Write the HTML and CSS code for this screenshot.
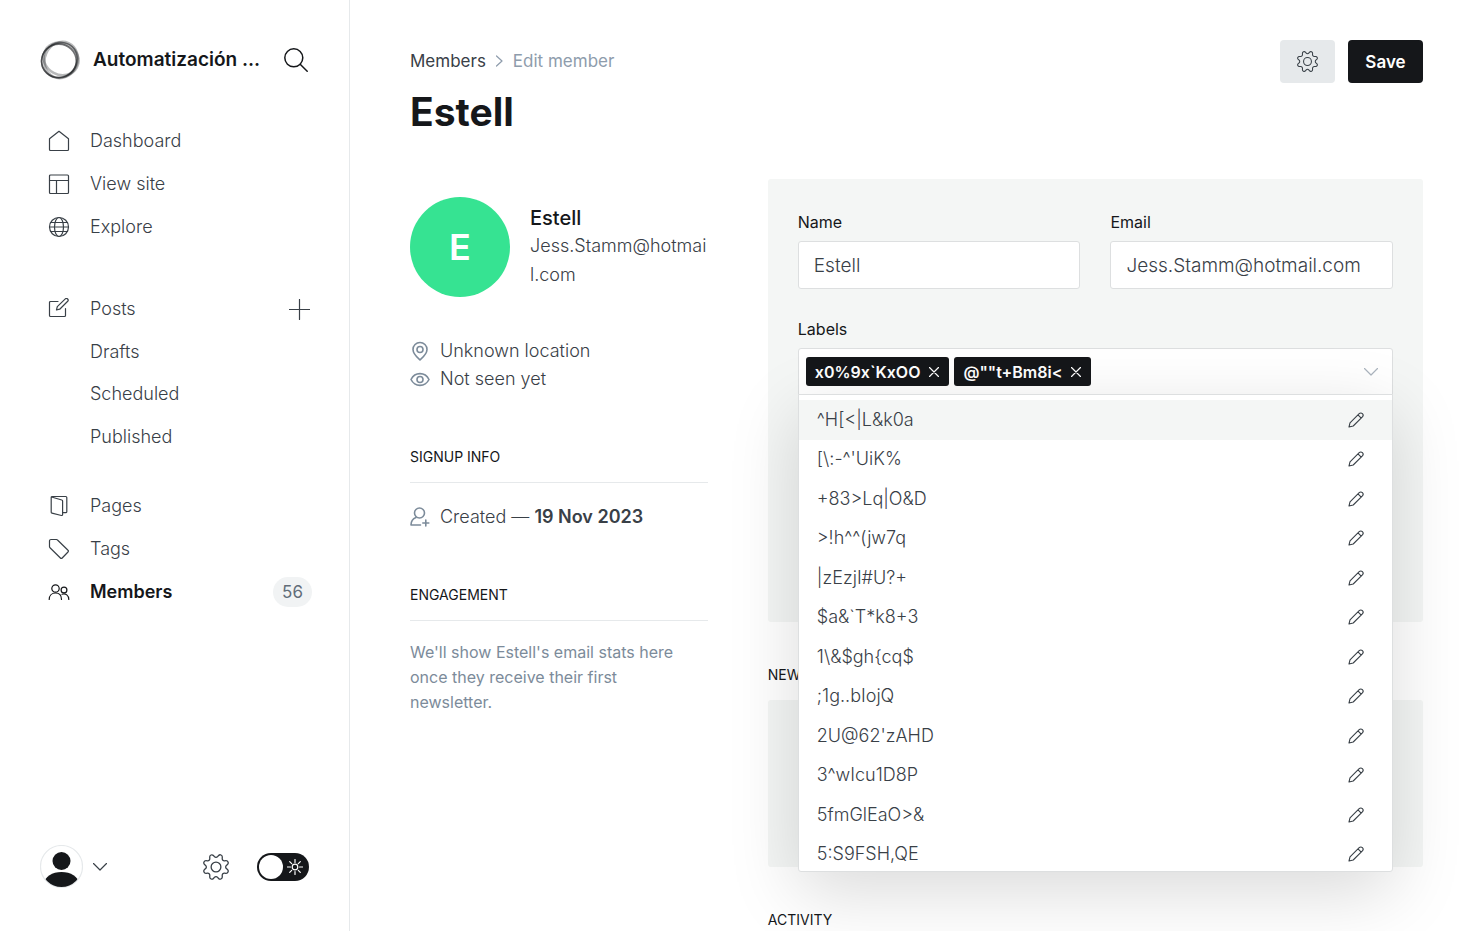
FILE: index.html
```
<!DOCTYPE html>
<html lang="en">
<head>
<meta charset="utf-8">
<title>Edit member</title>
<link rel="stylesheet" href="styles.css">
</head>
<body>
<svg class="sprite" aria-hidden="true">
  <symbol id="gear" viewBox="0 0 24 24"><path d="M10.546 2.438a1.957 1.957 0 002.908 0L14.4 1.4a1.959 1.959 0 013.41 1.413l-.071 1.4A1.958 1.958 0 0019.79 6.27l1.4-.071a1.959 1.959 0 011.413 3.41l-1.042.94a1.96 1.96 0 000 2.909l1.042.94a1.959 1.959 0 01-1.413 3.41l-1.4-.071a1.958 1.958 0 00-2.056 2.056l.071 1.4A1.959 1.959 0 0114.4 22.6l-.941-1.041a1.959 1.959 0 00-2.908 0L9.606 22.6A1.959 1.959 0 016.2 21.192l.072-1.4a1.958 1.958 0 00-2.056-2.056l-1.4.071A1.958 1.958 0 011.4 14.4l1.041-.94a1.96 1.96 0 000-2.909L1.4 9.606A1.958 1.958 0 012.809 6.2l1.4.071a1.958 1.958 0 002.058-2.06L6.2 2.81A1.959 1.959 0 019.606 1.4z"/><circle cx="12" cy="12" r="4.5"/></symbol>
  <symbol id="pencil" viewBox="0 0 16 16"><path d="M1 15l1-4.200L11.200 1.600a2 2 0 0 1 3.200 3.200L5.200 14zM10 2.900l3.200 3.200"/></symbol>
  <symbol id="chevron" viewBox="0 0 14 8"><path d="M.5.5L7 7 13.500.5"/></symbol>
  <symbol id="cross" viewBox="0 0 10 10"><path d="M.5.5l9 9M9.500.5l-9 9"/></symbol>
</svg>
<div class="app">
  <aside class="sidebar">
    <header class="brand">
      <svg class="logo" viewBox="0 0 38 38" aria-hidden="true"><g fill="none" stroke="#15171a"><ellipse cx="18" cy="20" rx="16.500" ry="16" stroke-width="1.600" stroke-opacity=".6"/><ellipse cx="20" cy="18" rx="17" ry="15" transform="rotate(28 20 18)" stroke-width="2.500" stroke-opacity=".3"/><ellipse cx="20" cy="19" rx="15.500" ry="17.500" transform="rotate(24 20 19)" stroke-width="2.500" stroke-opacity=".3"/><ellipse cx="18.500" cy="19" rx="17.500" ry="16" transform="rotate(-35 18.500 19)" stroke-width="1.500" stroke-opacity=".4"/></g></svg>
      <span class="site-name">Automatización ...</span>
      <button class="plain search" aria-label="Search"><svg width="24" height="24" viewBox="0 0 24 24"><circle cx="9.800" cy="9.800" r="9"/><path d="M16.200 16.200l7 7"/></svg></button>
    </header>
    <nav class="nav">
      <ul>
        <li><a href="#"><svg width="22" height="22" viewBox="0 0 22 22"><path d="M1.500 8.700L11 1.300l9.500 7.400V19.500a1 1 0 0 1-1 1h-17a1 1 0 0 1-1-1z"/></svg>Dashboard</a></li>
        <li><a href="#"><svg width="22" height="22" viewBox="0 0 22 22"><rect x="1.500" y="2" width="19" height="18.500" rx="1"/><path d="M1.500 7.500h19M8.500 7.500v13"/></svg>View site</a></li>
        <li><a href="#"><svg width="22" height="22" viewBox="0 0 22 22"><circle cx="11" cy="11" r="9.500"/><ellipse cx="11" cy="11" rx="4.500" ry="9.500"/><path d="M2.500 6.500h17M1.500 11h19M2.500 15.500h17"/></svg>Explore</a></li>
      </ul>
      <ul class="posts">
        <li><a href="#"><svg width="22" height="22" viewBox="0 0 22 22"><path d="M10 3.500H2.500a1 1 0 0 0-1 1V17.500a1 1 0 0 0 1 1h14a1 1 0 0 0 1-1V10.500"/><path d="M8.500 12l.8-3.400 8-7.700a1.700 1.700 0 0 1 2.400 2.400l-8 7.900z"/></svg>Posts</a><button class="plain" aria-label="New post"><svg width="21" height="21" viewBox="0 0 21 21"><path d="M10.500.5v20M.5 10.500h20"/></svg></button></li>
        <li><a class="sub" href="#">Drafts</a></li>
        <li><a class="sub" href="#">Scheduled</a></li>
        <li><a class="sub" href="#">Published</a></li>
      </ul>
      <ul>
        <li><a href="#"><svg width="22" height="22" viewBox="0 0 22 22"><path d="M3.500 2l10.300 3a1 1 0 0 1 .8 1V19.500a1 1 0 0 1-1.200 1L4 18.200a1 1 0 0 1-.8-1V2.500a1 1 0 0 1 1-1H17.800a1 1 0 0 1 1 1V16.700a1 1 0 0 1-1 1h-3"/></svg>Pages</a></li>
        <li><a href="#"><svg width="22" height="22" viewBox="0 0 22 22"><path d="M1.500 3a1.500 1.500 0 0 1 1.500-1.500h5.500a1.500 1.500 0 0 1 1 .5L20 12.200a1.200 1.200 0 0 1 0 1.800l-5.800 6a1.200 1.200 0 0 1-1.800 0L2 9.800a1.500 1.500 0 0 1-.5-1z"/></svg>Tags</a></li>
        <li><a class="current" href="#"><svg width="22" height="22" viewBox="0 0 22 22"><circle cx="7.500" cy="7.500" r="3.700"/><circle cx="16" cy="9" r="2.900"/><path d="M1.200 18.500c0-3.800 2.500-6.500 6.300-6.500s6 2.700 6 6.500M14 13.200c3.800-1.200 6.800 1.200 6.800 5.300"/></svg>Members</a><span class="count">56</span></li>
      </ul>
    </nav>
    <footer class="account">
      <button class="plain user" aria-label="Account"><svg width="43" height="43" viewBox="0 0 43 43"><defs><clipPath id="disc"><circle cx="21.500" cy="21.500" r="20.500"/></clipPath></defs><circle cx="21.500" cy="21.500" r="21" fill="#fff" stroke="#e6e9eb"/><g clip-path="url(#disc)" fill="#15171a" stroke="none"><circle cx="21.500" cy="16" r="9"/><ellipse cx="21.500" cy="38" rx="17" ry="11"/></g></svg><svg width="14" height="8"><use href="#chevron"/></svg></button>
      <button class="plain settings" aria-label="Settings"><svg width="26" height="26"><use href="#gear"/></svg></button>
      <label class="toggle"><input type="checkbox" aria-label="Dark mode"><svg width="16" height="16" viewBox="0 0 16 16"><circle cx="8" cy="8" r="2.800"/><path d="M8 .5v3M8 12.500v3M.5 8h3M12.500 8h3M2.700 2.700l2 2M11.300 11.300l2 2M2.700 13.300l2-2M11.300 4.700l2-2"/></svg></label>
    </footer>
  </aside>

  <main class="main">
    <header class="topbar">
      <div>
        <nav class="crumbs" aria-label="Breadcrumb"><a href="#">Members</a><svg width="7" height="12" viewBox="0 0 7 12"><path d="M.5 1l5.500 5-5.500 5"/></svg><span>Edit member</span></nav>
        <h1>Estell</h1>
      </div>
      <div class="actions">
        <button class="btn btn-gray" aria-label="Member actions"><svg width="21" height="21"><use href="#gear"/></svg></button>
        <button class="btn btn-black">Save</button>
      </div>
    </header>
    <div class="columns">
      <section class="profile">
        <div class="identity">
          <div class="avatar">E</div>
          <div class="who"><h2>Estell</h2><p>Jess.Stamm@hotmail.com</p></div>
        </div>
        <ul class="facts">
          <li><svg width="20" height="20" viewBox="0 0 20 20"><path d="M10 19c-2-1.800-7-6-7-10.500a7 7 0 0 1 14 0C17 13 12 17.200 10 19z"/><circle cx="10" cy="8.500" r="3"/></svg>Unknown location</li>
          <li><svg width="20" height="20" viewBox="0 0 20 20"><path d="M1 10.500C5 2.700 15 2.700 19 10.500 15 18.300 5 18.300 1 10.500z"/><circle cx="10" cy="10.500" r="3"/></svg>Not seen yet</li>
        </ul>
        <h3>Signup info</h3>
        <p class="created"><svg width="20" height="20" viewBox="0 0 20 20"><circle cx="9.500" cy="6" r="5"/><path d="M6 10.500c-3 1.200-5 3.500-5 7.500h9.500M15.800 13v6M12.800 16h6"/></svg><span>Created — <b>19 Nov 2023</b></span></p>
        <h3>Engagement</h3>
        <p class="hint">We'll show Estell's email stats here once they receive their first newsletter.</p>
      </section>
      <section class="details">
        <form class="card">
          <div class="field"><label for="name">Name</label><input id="name" type="text" value="Estell"></div>
          <div class="field"><label for="email">Email</label><input id="email" type="email" value="Jess.Stamm@hotmail.com"></div>
          <div class="field wide">
            <label for="labels">Labels</label>
            <div class="select">
              <div class="control">
                <span class="token">x0%9x`KxOO<button type="button" aria-label="Remove label"><svg width="10" height="10"><use href="#cross"/></svg></button></span>
                <span class="token">@""t+Bm8i&lt;<button type="button" aria-label="Remove label"><svg width="10" height="10"><use href="#cross"/></svg></button></span>
                <input id="labels" type="text" autocomplete="off">
                <svg class="arrow" width="14" height="8"><use href="#chevron"/></svg>
              </div>
              <div class="menu">
                <ul class="options">
                  <li class="active">^H[&lt;|L&amp;k0a<button type="button" aria-label="Edit label"><svg width="16" height="16"><use href="#pencil"/></svg></button></li>
                  <li>[\:-^'UiK%<button type="button" aria-label="Edit label"><svg width="16" height="16"><use href="#pencil"/></svg></button></li>
                  <li>+83&gt;Lq|O&amp;D<button type="button" aria-label="Edit label"><svg width="16" height="16"><use href="#pencil"/></svg></button></li>
                  <li>&gt;!h^^(jw7q<button type="button" aria-label="Edit label"><svg width="16" height="16"><use href="#pencil"/></svg></button></li>
                  <li>|zEzjI#U?+<button type="button" aria-label="Edit label"><svg width="16" height="16"><use href="#pencil"/></svg></button></li>
                  <li>$a&amp;`T*k8+3<button type="button" aria-label="Edit label"><svg width="16" height="16"><use href="#pencil"/></svg></button></li>
                  <li>1\&amp;$gh{cq$<button type="button" aria-label="Edit label"><svg width="16" height="16"><use href="#pencil"/></svg></button></li>
                  <li>;1g..bIojQ<button type="button" aria-label="Edit label"><svg width="16" height="16"><use href="#pencil"/></svg></button></li>
                  <li>2U@62'zAHD<button type="button" aria-label="Edit label"><svg width="16" height="16"><use href="#pencil"/></svg></button></li>
                  <li>3^wIcu1D8P<button type="button" aria-label="Edit label"><svg width="16" height="16"><use href="#pencil"/></svg></button></li>
                  <li>5fmGlEaO&gt;&amp;<button type="button" aria-label="Edit label"><svg width="16" height="16"><use href="#pencil"/></svg></button></li>
                  <li>5:S9FSH,QE<button type="button" aria-label="Edit label"><svg width="16" height="16"><use href="#pencil"/></svg></button></li>
                </ul>
              </div>
            </div>
          </div>
        </form>
        <h3 class="heading">Newsletters</h3>
        <div class="card newsletters"></div>
        <h3 class="heading">Activity</h3>
      </section>
    </div>
  </main>
</div>
</body>
</html>
```

FILE: styles.css
```
* { box-sizing: border-box; }
body, h1, h2, h3, p, ul { margin: 0; padding: 0; }
ul { list-style: none; }
body {
  font: 300 18px/28px Inter, sans-serif;
  color: #394047;
  background: #fff;
  overflow: hidden;
}
a { color: inherit; text-decoration: none; }
button, input { font: inherit; color: inherit; }
svg { flex: none; fill: none; stroke: currentColor; stroke-width: 1.2; stroke-linecap: round; stroke-linejoin: round; }
symbol { overflow: visible; }
.sprite { position: absolute; width: 0; height: 0; }
.plain { display: flex; align-items: center; padding: 0; border: 0; background: none; }

.app { display: flex; height: 100vh; }

.sidebar {
  flex: 0 0 350px;
  min-width: 0;
  display: flex;
  flex-direction: column;
  border-right: 1px solid #e6e9eb;
}
.brand { display: flex; align-items: center; padding: 40px 41px 0 40px; }
.logo { width: 40px; height: 40px; }
.site-name {
  flex: 1;
  min-width: 0;
  margin: 0 10px 0 13px;
  overflow: hidden;
  white-space: nowrap;
  text-overflow: ellipsis;
  font-size: 19px;
  font-weight: 600;
  color: #15171a;
}
.search { color: #15171a; }
.search svg { stroke-width: 1.5; }
.nav { flex: 1; padding: 40px 37px 0 48px; }
.nav ul { display: grid; grid-auto-rows: 1fr; min-height: 128px; margin-bottom: 40px; }
.nav .posts { min-height: 170px; margin-bottom: 27px; }
.nav li { display: flex; align-items: center; justify-content: space-between; }
.nav li .plain { margin-right: 2px; }
.nav a { display: flex; align-items: center; gap: 20px; }
.nav .sub { padding-left: 42px; }
.nav .current { font-weight: 600; color: #15171a; }
.count {
  padding: 1px 9px;
  border-radius: 15px;
  background: #f1f3f4;
  color: #626d79;
  font-size: 17px;
  font-weight: 400;
}
.account { display: flex; align-items: center; padding: 0 40px 43px; }
.user { gap: 10px; }
.settings { margin: 0 28px 0 auto; }
.toggle {
  display: flex;
  align-items: center;
  gap: 4px;
  width: 52px;
  height: 28px;
  padding: 2px;
  border-radius: 14px;
  background: #15171a;
  color: #fff;
}
.toggle input { appearance: none; width: 24px; height: 24px; margin: 0; border-radius: 12px; background: #fff; }

.main { flex: 1; min-width: 0; padding: 40px 60px 0; }
.topbar { display: flex; justify-content: space-between; align-items: flex-start; }
.crumbs { display: flex; align-items: center; gap: 10px; padding-top: 7px; font-size: 17px; font-weight: 400; color: #8e9cac; }
.crumbs a { color: #394047; }
h1 { margin-top: 12px; font-size: 39px; line-height: 50px; font-weight: 700; color: #15171a; }
.actions { display: flex; gap: 13px; }
.btn { display: flex; align-items: center; justify-content: center; height: 43px; padding: 0 17px; border: 0; border-radius: 4px; font-size: 17px; font-weight: 600; }
.btn-gray { background: #e6e9eb; }
.btn-black { min-width: 75px; background: #15171a; color: #fff; }

.columns { display: grid; grid-template-columns: 5fr 11fr; gap: 60px; margin-top: 42px; }
.profile { padding-top: 18px; }
.identity { display: flex; align-items: center; gap: 20px; }
.avatar {
  flex: none;
  width: 100px;
  height: 100px;
  border-radius: 50%;
  background: #36e392;
  color: #fff;
  font-size: 36px;
  font-weight: 600;
  line-height: 100px;
  text-align: center;
}
.who { min-width: 0; overflow-wrap: anywhere; }
.who h2 { font-size: 20px; line-height: 26px; font-weight: 500; color: #15171a; }
.who p { line-height: 29px; }
.facts { margin-top: 40px; }
.facts li, .created { display: flex; align-items: center; gap: 10px; }
.facts svg, .created svg { color: #7c8b9a; stroke-width: 1.6; }
h3 { font-size: 14px; line-height: 20px; font-weight: 400; text-transform: uppercase; color: #15171a; }
.profile h3 { margin-top: 54px; padding-bottom: 15px; border-bottom: 1px solid #e6e9eb; }
.created { margin-top: 20px; }
.created b { font-weight: 600; }
.hint { margin-top: 19px; padding-right: 20px; font-size: 16px; line-height: 25px; font-weight: 400; color: #7c8b9a; }

.card { border-radius: 3px; background: #f4f6f5; }
form.card { display: grid; grid-template-columns: 1fr 1fr; align-content: start; gap: 27px 30px; min-height: 443px; padding: 30px; }
.field { min-width: 0; }
.wide { grid-column: 1 / -1; }
.field > label { display: block; margin-bottom: 6px; font-size: 16px; line-height: 26px; font-weight: 400; color: #15171a; }
.field > input { display: block; width: 100%; height: 48px; padding: 0 15px; border: 1px solid #dddfe0; border-radius: 3px; background: #fff; font-size: 19px; }
.select { position: relative; }
.control { display: flex; align-items: center; gap: 5px; height: 47px; padding: 0 14px 0 7px; border: 1px solid #dddfe0; border-radius: 3px 3px 0 0; background: #fff; }
.control input { flex: 1; min-width: 0; border: 0; background: none; outline: 0; }
.arrow { color: #abb4be; }
.token { display: flex; align-items: center; gap: 9px; height: 29px; padding: 0 10px 0 9px; border-radius: 3px; background: #15171a; color: #fff; font-size: 16px; line-height: 26px; font-weight: 600; }
.token button, .options button { display: flex; padding: 0; border: 0; background: none; }
.menu {
  position: absolute;
  z-index: 1;
  top: 46px;
  left: 0;
  right: 0;
  max-height: 478px;
  padding-top: 5px;
  overflow: hidden;
  border: 1px solid #dddfe0;
  border-radius: 0 0 3px 3px;
  background: #fff;
  box-shadow: 0 20px 70px rgba(0, 0, 0, .15);
}
.options { display: grid; grid-auto-rows: 1fr; min-height: 474px; }
.options li { display: flex; align-items: center; justify-content: space-between; padding: 0 28px 0 18px; }
.options svg { stroke-width: 1.1; }
.options .active { background: #f4f6f5; }
.heading { margin-top: 43px; }
.newsletters { height: 167px; margin-top: 15px; }
```
